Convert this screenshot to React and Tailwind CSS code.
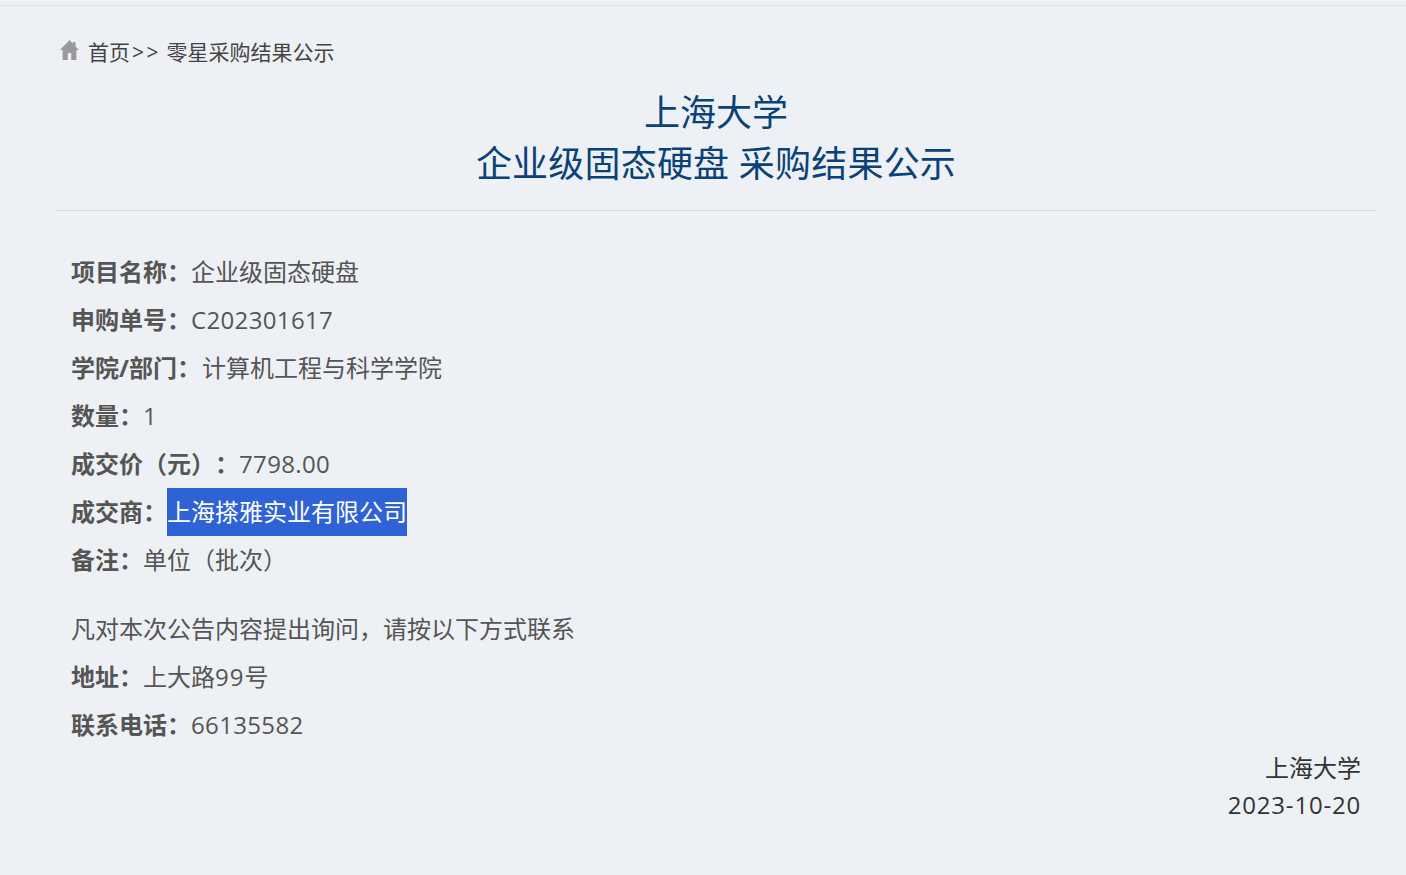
function Row({ label, children }) {
  return (
    <p className="h-12 leading-[48px] text-[24px]">
      <strong className="font-bold">{label}</strong>
      {children}
    </p>
  );
}

// latin runs sit a little wider than Open Sans in the reference
function Num({ children }) {
  return <span className="tracking-[0.35px]">{children}</span>;
}

export default function App() {
  return (
    <div className="min-h-[875px] bg-[#edf0f5] font-['Open_Sans','Noto_Sans_CJK_SC',sans-serif] text-[#555] [text-spacing-trim:space-all]">
      <div className="h-[6px] border-b border-[#e2e5ea]" />
      <div className="pl-[56px] pr-[30px]">
        <div className="flex items-center h-[24px] mt-[35px] pl-[4px] text-[21px] text-[#444]">
          <svg width="19" height="20" viewBox="1 2 22 20" preserveAspectRatio="none" fill="#999" className="mr-[9px] mb-[6px]">
            <path d="M12 2 1 12h3v10h6v-7h4v7h6V12h3l-4-3.6V4h-3v1.7z" />
          </svg>
          <span>首页<span className="tracking-[2.5px] ml-[2px]">&gt;&gt;</span> 零星采购结果公示</span>
        </div>
        <div className="mt-[22px] pb-[21px] border-b border-[#d6d9dd] text-center text-[36px] leading-[51px] text-[#0a4277]">
          <div>上海大学</div>
          <div className="tracking-[0.2px]">企业级固态硬盘 采购结果公示</div>
        </div>
        <div className="pt-[37px] px-[15px] text-[24px]">
          <Row label="项目名称：">企业级固态硬盘</Row>
          <Row label="申购单号："><Num>C202301617</Num></Row>
          <Row label="学院/部门："><span className="ml-[1px]">计算机工程与科学学院</span></Row>
          <Row label="数量：">1</Row>
          <Row label="成交价（元）："><Num>7798.00</Num></Row>
          <Row label="成交商："><span className="inline-block h-12 bg-[#2f62d4] text-white">上海搽雅实业有限公司</span></Row>
          <Row label="备注：">单位（批次）</Row>
          <div className="h-[21px]" />
          <p className="h-12 leading-[48px]">凡对本次公告内容提出询问，请按以下方式联系</p>
          <Row label="地址：">上大路<span className="tracking-[1px]">99</span>号</Row>
          <Row label="联系电话："><Num>66135582</Num></Row>
        </div>
        <div className="pr-[15px] text-right text-[24px] leading-[37px] text-[#333]">
          <div>上海大学</div>
          <div className="tracking-[0.8px]">2023-10-20</div>
        </div>
      </div>
    </div>
  );
}
